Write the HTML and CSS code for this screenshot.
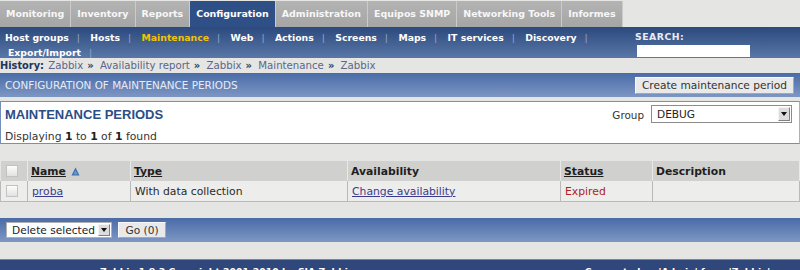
FILE: index.html
```html
<!DOCTYPE html>
<html lang="en">
<head>
    <meta charset="UTF-8">
    <title>Configuration of maintenance</title>
    <link rel="stylesheet" href="styles.css">
</head>
<body>
    <!-- Main menu -->
    <div class="topmenu">
        <a class="tab">Monitoring</a>
        <a class="tab">Inventory</a>
        <a class="tab">Reports</a>
        <a class="tab active">Configuration</a>
        <a class="tab">Administration</a>
        <a class="tab">Equipos SNMP</a>
        <a class="tab">Networking Tools</a>
        <a class="tab">Informes</a>
    </div>

    <!-- Sub menu -->
    <div class="submenu">
        <div class="sublinks">
            <span class="subitem"><a>Host groups</a><span class="sep">|</span></span>
            <span class="subitem"><a>Hosts</a><span class="sep">|</span></span>
            <span class="subitem"><a class="current">Maintenance</a><span class="sep">|</span></span>
            <span class="subitem"><a>Web</a><span class="sep">|</span></span>
            <span class="subitem"><a>Actions</a><span class="sep">|</span></span>
            <span class="subitem"><a>Screens</a><span class="sep">|</span></span>
            <span class="subitem"><a>Maps</a><span class="sep">|</span></span>
            <span class="subitem"><a>IT services</a><span class="sep">|</span></span>
            <span class="subitem"><a>Discovery</a><span class="sep">|</span></span>
            <span class="subitem second"><a>Export/Import</a><span class="sep">|</span></span>
        </div>
        <div class="search">
            <div class="search-label">SEARCH:</div>
            <input class="search-input" type="text">
        </div>
    </div>

    <div class="history">
        <b>History:</b>
        <a>Zabbix</a><span class="arr">»</span>
        <a>Availability report</a><span class="arr">»</span>
        <a>Zabbix</a><span class="arr">»</span>
        <a>Maintenance</a><span class="arr">»</span>
        <a>Zabbix</a>
    </div>

    <div class="bar header-bar">
        <span class="bar-title">CONFIGURATION OF MAINTENANCE PERIODS</span>
        <button type="button" class="btn">Create maintenance period</button>
    </div>

    <div class="panel">
        <div class="panel-left">
            <div class="panel-title">MAINTENANCE PERIODS</div>
            <div class="panel-count">Displaying <b>1</b> to <b>1</b> of <b>1</b> found</div>
        </div>
        <div class="panel-right">
            <span class="group-label">Group</span>
            <span class="combo group-combo">
                <span class="combo-text">DEBUG</span>
                <span class="combo-arrow"></span>
            </span>
        </div>
    </div>

    <table class="list">
        <tr class="list-head">
            <th class="col-check"><input type="checkbox"></th>
            <th class="col-name"><a>Name</a> <svg class="sort" width="9" height="9" viewBox="0 0 9 9"><path d="M4.5 0.5 L8.5 8.5 L0.5 8.5 Z" fill="#3b6db3"/><path d="M4.5 3 L6.5 7.5 L2.5 7.5 Z" fill="#6e9ad4"/></svg></th>
            <th class="col-type"><a>Type</a></th>
            <th class="col-avail">Availability</th>
            <th class="col-status"><a>Status</a></th>
            <th>Description</th>
        </tr>
        <tr class="list-row">
            <td class="col-check"><input type="checkbox"></td>
            <td><a class="link">proba</a></td>
            <td>With data collection</td>
            <td><a class="link">Change availability</a></td>
            <td class="expired">Expired</td>
            <td></td>
        </tr>
    </table>

    <div class="bar footer-bar">
        <span class="combo action-combo">
            <span class="combo-text">Delete selected</span>
            <span class="combo-arrow"></span>
        </span>
        <button type="button" class="btn btn-go">Go (0)</button>
    </div>

    <div class="page-footer">
        <span class="copy">Zabbix 1.8.3 Copyright 2001-2010 by SIA Zabbix</span>
        <span class="connected">Connected as 'Admin' from 'Zabbix'</span>
    </div>
</body>
</html>
```

FILE: styles.css
```css
body {
    margin: 0;
    background-color: #e5e5e4;
    font-family: "DejaVu Sans", sans-serif;
    font-size: 10.6px;
    color: #222;
    overflow: hidden;
}

a {
    cursor: pointer;
}

/* main menu */
.topmenu {
    display: flex;
    padding-top: 1px;
    height: 26px;
}

.tab {
    padding: 0 6px;
    line-height: 26px;
    background: linear-gradient(#b4b4b4, #a5a5a5);
    border-right: 1px solid #cbcbcb;
    color: #f7f7f7;
    font-weight: bold;
    font-size: 9.45px;
}

.tab.active {
    background: #2f4f87;
    color: #fff;
}

/* sub menu */
.submenu {
    display: flex;
    height: 31px;
    background: linear-gradient(#2c497e, #5a77a8);
}

.sublinks {
    width: 630px;
    padding: 3px 0 0 5px;
    line-height: 15px;
}

.subitem {
    white-space: nowrap;
    font-size: 9.3px;
    font-weight: bold;
    color: #fff;
}

.subitem.second {
    margin-left: 3px;
}

.subitem .current {
    color: #f2c400;
}

.sep {
    padding: 0 7px 0 8px;
    font-weight: normal;
    color: #95a8c9;
}

.search {
    padding-top: 4px;
}

.search-label {
    font-size: 9.3px;
    font-weight: bold;
    color: #e8edf5;
    letter-spacing: 0.5px;
}

.search-input {
    display: block;
    width: 113px;
    height: 12px;
    margin: 3px 0 0 2px;
    padding: 0;
    border: none;
    background: #fff;
}

/* history */
.history {
    height: 15px;
    line-height: 16px;
    font-size: 10.2px;
    color: #5b6689;
}

.history b {
    font-size: 9.8px;
    color: #22345a;
}

.history a {
    margin-left: 1px;
}

.arr {
    margin: 0 2px 0 4px;
    font-weight: bold;
    font-size: 10px;
    color: #2b3a5c;
}

/* blue bars */
.bar {
    display: flex;
    align-items: center;
    height: 24px;
    background: linear-gradient(#4a6ba7, #7d97c4);
}

.header-bar {
    justify-content: space-between;
    padding: 0 6px 0 5px;
}

.bar-title {
    font-size: 10.4px;
    color: #e6ecf6;
}

.btn {
    height: 17px;
    padding: 0 6px;
    margin: 0;
    background: #e9e9e9;
    border: 1px solid;
    border-color: #f8f8f8 #a8a8a8 #a8a8a8 #f8f8f8;
    font-family: "DejaVu Sans", sans-serif;
    font-size: 10.6px;
    color: #333;
}

/* filter panel */
.panel {
    display: flex;
    justify-content: space-between;
    height: 41px;
    margin-top: 4px;
    background: #fff;
    border: 1px solid #7590b8;
    border-right-color: #9fb3d0;
}

.panel-left {
    padding: 5px 0 0 4px;
}

.panel-title {
    font-family: "Liberation Sans", Arial, sans-serif;
    font-size: 13px;
    font-weight: bold;
    color: #2c4d85;
    line-height: 15px;
}

.panel-count {
    margin-top: 8px;
    font-size: 10.8px;
    color: #333;
}

.panel-count b {
    color: #222;
}

.panel-right {
    display: flex;
    align-items: flex-start;
    gap: 7px;
    padding: 3px 7px 0 0;
}

.group-label {
    margin-top: 4px;
    font-size: 10.4px;
    color: #333;
}

.combo {
    position: relative;
    display: inline-block;
    box-sizing: border-box;
    background: #fff;
    border: 1px solid #8c8c8c;
}

.combo-text {
    padding-left: 5px;
    font-size: 10.6px;
    color: #222;
}

.combo-arrow {
    position: absolute;
    top: 1px;
    right: 1px;
    bottom: 1px;
    width: 12px;
    box-sizing: border-box;
    background: #dcdcdc;
    border: 1px solid;
    border-color: #f4f4f4 #808080 #808080 #f4f4f4;
}

.combo-arrow::after {
    content: "";
    position: absolute;
    left: 2px;
    top: 50%;
    margin-top: -2px;
    border-left: 3px solid transparent;
    border-right: 3px solid transparent;
    border-top: 4px solid #111;
}

.group-combo {
    width: 141px;
    height: 18px;
    line-height: 16px;
}

/* list table */
.list {
    width: 800px;
    margin-top: 17px;
    border-collapse: collapse;
    font-size: 10.8px;
}

.list-head th {
    height: 20px;
    padding: 0 0 0 3px;
    background: #d0d0cf;
    border-right: 1px solid #e9e9e9;
    text-align: left;
    font-weight: bold;
    color: #1e1e1e;
}

.list-head a {
    text-decoration: underline;
    color: #1e1e1e;
}

.list-row td {
    height: 20px;
    padding: 0 0 0 4px;
    background: #ededec;
    border: 1px solid #b9b9b9;
    border-top: none;
    color: #2a2a2a;
}

.list .col-check {
    width: 21px;
    padding-left: 5px;
}

.col-name {
    width: 99px;
}

.col-type {
    width: 213px;
}

.col-avail {
    width: 209px;
}

.col-status {
    width: 88px;
}

.sort {
    vertical-align: -1px;
    margin-left: 1px;
}

input[type="checkbox"] {
    appearance: none;
    display: block;
    width: 12px;
    height: 12px;
    margin: 0;
    border: 1px solid #c2c2c2;
    background: linear-gradient(#fdfdfd, #e2e2e2);
}

.link {
    color: #3b3b8e;
    text-decoration: underline;
}

.list-row .expired {
    color: #ad2323;
}

/* bottom actions */
.footer-bar {
    gap: 6px;
    margin-top: 16px;
    padding-left: 6px;
}

.action-combo {
    width: 106px;
    height: 16px;
    line-height: 14px;
    border-color: #b0b0b0;
}

.btn-go {
    height: 16px;
    width: 48px;
    padding: 0;
}

.page-footer {
    display: flex;
    justify-content: space-between;
    margin-top: 17px;
    height: 20px;
    padding: 6px 30px 0 100px;
    background: #2f477a;
    border-top: 1px solid #6d86b3;
    font-size: 9.3px;
    font-weight: bold;
    color: #fff;
}
```
